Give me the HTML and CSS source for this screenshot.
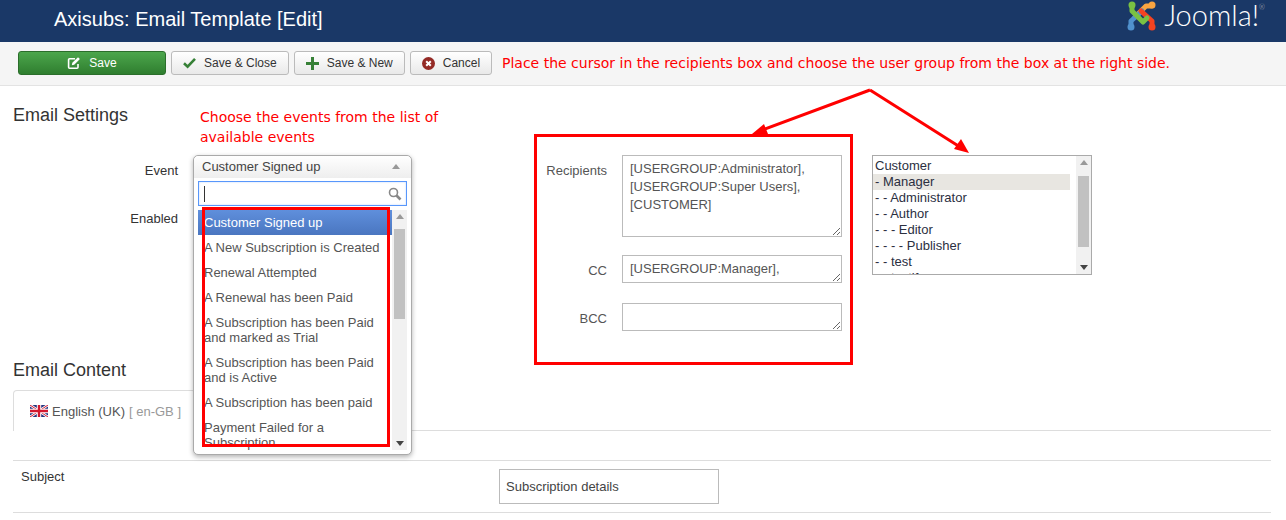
FILE: index.html
```html
<!DOCTYPE html>
<html lang="en">
<head>
  <meta charset="UTF-8" />
  <title>Axisubs: Email Template [Edit]</title>
  <link rel="stylesheet" href="styles.css">
</head>
<body>
  <header class="topbar">
    <h1 class="page-title">Axisubs: Email Template [Edit]</h1>
    <div class="brand">
      <svg class="brand-mark" width="30" height="30" viewBox="0 0 30 30" fill="none" stroke-width="5" stroke-linecap="round" stroke-linejoin="round">
        <path stroke="#f9a541" d="M25 5 L19 5 L8 16" />
        <path stroke="#5091cd" d="M4 25 L4 19 L15 9" transform="translate(0 1)" />
        <path stroke="#f44321" d="M25 26 L25 20 L14 10" transform="translate(0 0)" />
        <path stroke="#7ac143" d="M5 5 L5 10 L16 21 L20 17" />
        <circle cx="5" cy="4" r="3.5" fill="#7ac143" stroke="none" />
        <circle cx="25" cy="4" r="3.5" fill="#f9a541" stroke="none" />
        <circle cx="4" cy="26" r="3.5" fill="#5091cd" stroke="none" />
        <circle cx="25" cy="26" r="3.5" fill="#f44321" stroke="none" />
      </svg>
      <span class="brand-name">Joomla!<sup class="brand-reg">®</sup></span>
    </div>
  </header>

  <div class="toolbar">
    <button class="btn btn-save">
      <svg width="14" height="14" viewBox="0 0 14 14" fill="none" stroke="#fff" stroke-width="1.6"><path d="M11 8v3.2a1 1 0 0 1-1 1H2.6a1 1 0 0 1-1-1V3.8a1 1 0 0 1 1-1H8" /><path d="M4.8 9.2l.5-2.4L11 1.2l1.9 1.9-5.7 5.6z" fill="#fff" stroke="none" /></svg>
      Save
    </button>
    <button class="btn">
      <svg width="13" height="12" viewBox="0 0 13 12" fill="none" stroke="#378137" stroke-width="2.6"><path d="M1 6.2l3.6 3.4L12 1.8" /></svg>
      Save &amp; Close
    </button>
    <button class="btn">
      <svg width="13" height="13" viewBox="0 0 13 13" fill="#378137"><path d="M5 0h3v5h5v3H8v5H5V8H0V5h5z" /></svg>
      Save &amp; New
    </button>
    <button class="btn">
      <svg width="13" height="13" viewBox="0 0 13 13"><circle cx="6.5" cy="6.5" r="6.5" fill="#942a25" /><path d="M4.2 4.2l4.6 4.6M8.8 4.2l-4.6 4.6" stroke="#fff" stroke-width="2" /></svg>
      Cancel
    </button>
  </div>

  <main class="content">
    <h2 class="section-title">Email Settings</h2>

    <div class="settings">
      <div class="settings-left">
        <div class="form-row">
          <label class="form-label">Event</label>
          <div class="chosen">
            <div class="chosen-current">Customer Signed up <span class="arrow-up"></span></div>
            <div class="chosen-search">
              <span class="caret"></span>
              <svg width="14" height="14" viewBox="0 0 14 14" fill="none" stroke="#888"><circle cx="5.5" cy="5.5" r="4" stroke-width="1.6" /><path d="M8.5 8.5l4 4" stroke-width="2.6" /></svg>
            </div>
            <div class="chosen-results">
              <ul class="chosen-list">
                <li class="active">Customer Signed up</li>
                <li>A New Subscription is Created</li>
                <li>Renewal Attempted</li>
                <li>A Renewal has been Paid</li>
                <li>A Subscription has been Paid and marked as Trial</li>
                <li>A Subscription has been Paid and is Active</li>
                <li>A Subscription has been paid</li>
                <li>Payment Failed for a Subscription</li>
              </ul>
              <div class="scrollbar">
                <span class="arrow-up"></span>
                <span class="thumb thumb-results"></span>
                <span class="arrow-down"></span>
              </div>
            </div>
          </div>
        </div>
        <div class="form-row">
          <label class="form-label">Enabled</label>
        </div>
      </div>

      <div class="settings-right">
        <div class="recipients">
          <div class="field-row">
            <label class="field-label">Recipients</label>
            <textarea class="field field-tall">[USERGROUP:Administrator], [USERGROUP:Super Users], [CUSTOMER]</textarea>
          </div>
          <div class="field-row">
            <label class="field-label">CC</label>
            <textarea class="field">[USERGROUP:Manager],</textarea>
          </div>
          <div class="field-row">
            <label class="field-label">BCC</label>
            <textarea class="field"></textarea>
          </div>
        </div>

        <div class="group-box">
          <ul class="group-list">
            <li>Customer</li>
            <li class="selected">- Manager</li>
            <li>- - Administrator</li>
            <li>- - Author</li>
            <li>- - - Editor</li>
            <li>- - - - Publisher</li>
            <li>- - test</li>
            <li>- - testif</li>
          </ul>
          <div class="scrollbar">
            <span class="arrow-up"></span>
            <span class="thumb thumb-groups"></span>
            <span class="arrow-down"></span>
          </div>
        </div>
      </div>
    </div>

    <h2 class="section-title">Email Content</h2>

    <div class="tabs">
      <div class="tab">
        <svg width="18" height="12" viewBox="0 0 18 12">
          <rect width="18" height="12" fill="#26357f" />
          <path d="M0 0l18 12M18 0L0 12" stroke="#fff" stroke-width="2.6" />
          <path d="M0 0l18 12M18 0L0 12" stroke="#d3172e" stroke-width="1" />
          <path d="M9 0v12M0 6h18" stroke="#fff" stroke-width="4.4" />
          <path d="M9 0v12M0 6h18" stroke="#d3172e" stroke-width="2.4" />
        </svg>
        English (UK) <span class="tab-code">[ en-GB ]</span>
      </div>
    </div>

    <div class="subject-row">
      <label class="subject-label">Subject</label>
      <input class="subject-input" type="text" value="Subscription details" />
    </div>
  </main>

  <!-- red notes drawn over the page -->
  <p class="note note-top">Place the cursor in the recipients box and choose the user group from the box at the right side.</p>
  <p class="note note-events">Choose the events from the list of available events</p>
  <div class="mark mark-events"></div>
  <div class="mark mark-recipients"></div>
  <svg class="arrows" width="1286" height="520" viewBox="0 0 1286 520" fill="none">
    <path d="M870 90L762 130M870 90L960 147" stroke="#f00" stroke-width="3" />
    <path d="M752 134l12-10 4 10z" fill="#f00" />
    <path d="M969 153l-15-4 7-10z" fill="#f00" />
  </svg>
</body>
</html>
```

FILE: styles.css
```css
* {
  box-sizing: border-box;
}

html, body {
  height: 520px;
  overflow: hidden;
}

body {
  position: relative;
  margin: 0;
  background: white;
  font-family: 'Liberation Sans', Arial, sans-serif;
  font-size: 13px;
  color: #333;
}

/* header */
.topbar {
  display: flex;
  justify-content: space-between;
  height: 42px;
  padding: 0 21px 0 54px;
  background: #1a3867;
}

.page-title {
  margin: 0;
  font-size: 20px;
  font-weight: normal;
  line-height: 39px;
  color: white;
}

.brand {
  display: flex;
  align-items: flex-start;
  gap: 7px;
}

.brand-mark {
  margin-top: 1px;
}

.brand-name {
  font-family: Lato, sans-serif;
  font-weight: 300;
  font-size: 29px;
  line-height: 30px;
  color: white;
}

.brand-reg {
  font-size: 7px;
  vertical-align: 16px;
  line-height: 0;
  color: #bbb;
}

/* toolbar */
.toolbar {
  display: flex;
  gap: 5px;
  height: 44px;
  padding: 9px 18px 0;
  background: #f5f5f5;
  border-bottom: 1px solid #e3e3e3;
}

.btn {
  display: flex;
  align-items: center;
  justify-content: center;
  gap: 8px;
  height: 24px;
  padding: 0 11px;
  border: 1px solid #bbb;
  border-radius: 3px;
  background: linear-gradient(#fff, #e9e9e9);
  font-family: inherit;
  font-size: 12px;
  color: #333;
}

.btn-save {
  width: 148px;
  border-color: #2b6e2b;
  background: linear-gradient(#4ca64c, #2f7e2f);
  color: white;
}

/* main */
.content {
  padding: 19px 15px 0 13px;
}

.section-title {
  margin: 0;
  font-size: 18px;
  font-weight: normal;
  line-height: 20px;
}

.settings {
  display: flex;
  height: 205px;
  margin-top: 30px;
}

.settings-left {
  width: 500px;
}

.form-row {
  display: flex;
  gap: 15px;
  height: 48px;
}

.form-label {
  width: 165px;
  padding-top: 8px;
  line-height: 15px;
  text-align: right;
}

/* open event dropdown */
.chosen {
  position: relative;
  z-index: 2;
  flex: none;
  width: 219px;
  height: 300px;
  padding: 0 4px;
  background: white;
  border: 1px solid #aaa;
  border-radius: 5px;
  box-shadow: 0 2px 5px rgba(0, 0, 0, 0.3);
}

.chosen-current {
  display: flex;
  justify-content: space-between;
  align-items: center;
  height: 22px;
  margin: 0 -4px;
  padding: 0 11px 2px 8px;
  background: linear-gradient(#fff, #eee);
  border-radius: 5px 5px 0 0;
  color: #444;
}

.chosen-search {
  display: flex;
  justify-content: space-between;
  align-items: center;
  height: 25px;
  margin-top: 3px;
  padding: 0 4px 0 5px;
  border: 1px solid #5897fb;
  box-shadow: inset 0 0 2px rgba(88, 151, 251, 0.4);
}

.caret {
  width: 1px;
  height: 16px;
  background: #333;
}

.chosen-results {
  display: flex;
  height: 240px;
  margin-top: 4px;
  overflow: hidden;
}

.chosen-list {
  flex: 1;
  margin: 0;
  padding: 0;
  list-style: none;
  color: #555;
}

.chosen-list li {
  padding: 5px 6px;
  line-height: 15px;
}

.chosen-list .active {
  background: linear-gradient(#5f8fdc, #4a76c0);
  color: white;
}

.scrollbar {
  position: relative;
  flex: none;
  display: flex;
  flex-direction: column;
  align-items: center;
  width: 15px;
  background: #f1f1f1;
}

.thumb {
  display: block;
  width: 11px;
  background: #c1c1c1;
}

.thumb-results {
  height: 90px;
  margin-top: 10px;
}

.thumb-groups {
  height: 71px;
  margin-top: 11px;
}

.arrow-up, .arrow-down {
  display: block;
  width: 0;
  height: 0;
  border-left: 4px solid transparent;
  border-right: 4px solid transparent;
}

.arrow-up {
  border-bottom: 5px solid #999;
}

.scrollbar .arrow-up {
  margin-top: 4px;
}

.arrow-down {
  position: absolute;
  bottom: 4px;
  border-top: 5px solid #444;
}

/* recipients + user groups */
.settings-right {
  display: flex;
  gap: 30px;
  align-items: flex-start;
}

.field-row {
  display: flex;
  gap: 15px;
  margin-bottom: 20px;
}

.field-label {
  width: 94px;
  padding-top: 8px;
  line-height: 15px;
  text-align: right;
  color: #555;
}

.field {
  display: block;
  width: 220px;
  height: 28px;
  padding: 4px 7px;
  border: 1px solid #bbb;
  font-family: inherit;
  font-size: 13px;
  line-height: 18px;
  color: #555;
}

.field-tall {
  height: 82px;
  margin-bottom: -2px;
}

.group-box {
  display: flex;
  justify-content: space-between;
  width: 220px;
  height: 120px;
  border: 1px solid #aaa;
  overflow: hidden;
}

.group-list {
  width: 197px;
  margin: 2px 0 0;
  padding: 0;
  list-style: none;
  line-height: 16px;
  color: #2b2f3f;
}

.group-list li {
  padding-left: 2px;
}

.group-list .selected {
  background: #e8e6e1;
}

/* tabs */
.content > .section-title:nth-of-type(2) {
  margin-top: 0;
}

.tabs {
  height: 41px;
  margin-top: 10px;
  border-bottom: 1px solid #ddd;
}

.tab {
  display: flex;
  align-items: center;
  gap: 4px;
  width: 183px;
  height: 41px;
  padding: 0 0 0 16px;
  background: white;
  border: 1px solid #ddd;
  border-bottom: none;
  border-radius: 4px 4px 0 0;
  color: #555;
}

.tab-code {
  color: #999;
}

.subject-row {
  display: flex;
  height: 53px;
  margin-top: 29px;
  padding: 8px;
  border-top: 1px solid #ddd;
  border-bottom: 1px solid #ddd;
}

.subject-label {
  width: 478px;
  line-height: 16px;
}

.subject-input {
  width: 220px;
  height: 35px;
  padding: 0 6px;
  border: 1px solid #bbb;
  font-family: inherit;
  font-size: 13px;
  color: #444;
}

/* annotations */
.note {
  position: absolute;
  z-index: 3;
  margin: 0;
  font-family: 'DejaVu Sans', sans-serif;
  font-size: 14px;
  line-height: 20px;
  color: #f00;
}

.note-top {
  left: 502px;
  top: 53px;
  width: 700px;
}

.note-events {
  left: 200px;
  top: 107px;
  width: 290px;
}

.mark {
  position: absolute;
  z-index: 3;
  border: 3px solid #f00;
}

.mark-events {
  left: 202px;
  top: 207px;
  width: 188px;
  height: 240px;
}

.mark-recipients {
  left: 534px;
  top: 134px;
  width: 319px;
  height: 231px;
}

.arrows {
  position: absolute;
  left: 0;
  top: 0;
  z-index: 3;
  pointer-events: none;
}
```
